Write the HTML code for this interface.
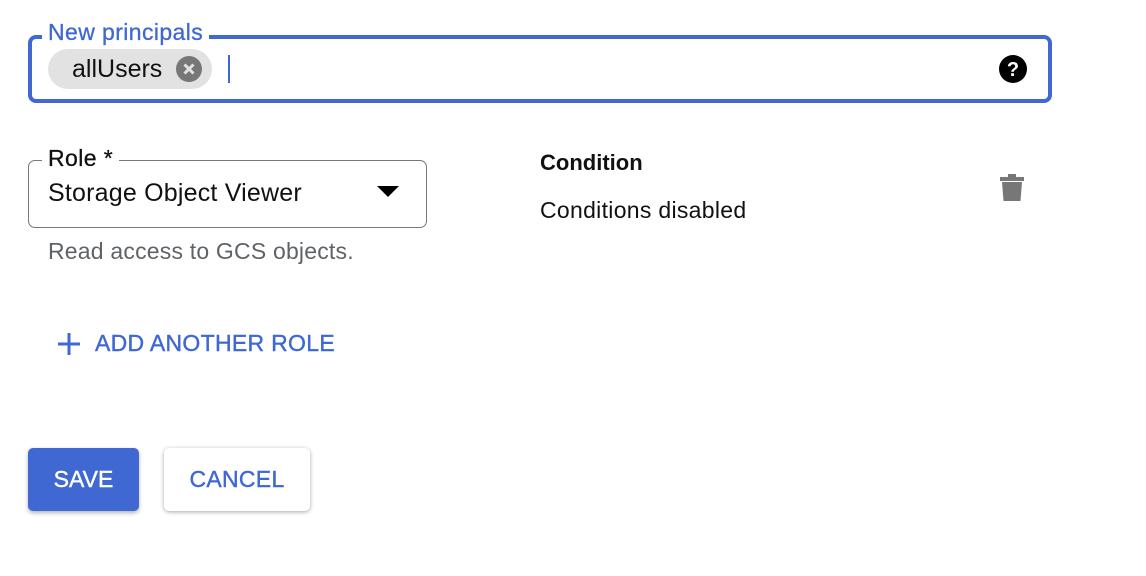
<!DOCTYPE html>
<html><head><style>
body{margin:0;width:1146px;height:576px;background:#fff;font-family:"Liberation Sans",Arial,sans-serif;position:relative;overflow:hidden}
.a{position:absolute;white-space:nowrap}
</style></head><body>
<div class="a" style="left:28px;top:35px;width:1016px;height:60px;border:4px solid #3f68d3;border-radius:8px"></div>
<div class="a" style="left:42px;top:19px;padding:0 6px;background:#fff;color:#3f68d3;font-size:23px;letter-spacing:0.4px;line-height:26px;-webkit-text-stroke:0.3px #3f68d3">New principals</div>
<div class="a" style="left:48px;top:49px;width:164px;height:40px;border-radius:20px;background:#e2e2e2"></div>
<div class="a" style="left:72px;top:55px;font-size:25px;line-height:28px;color:#111">allUsers</div>
<svg class="a" style="left:176px;top:56px" width="26" height="26" viewBox="0 0 26 26"><circle cx="13" cy="13" r="13" fill="#777"/><path d="M8.5 8.5L17.5 17.5M17.5 8.5L8.5 17.5" stroke="#e2e2e2" stroke-width="3"/></svg>
<div class="a" style="left:228px;top:55px;width:2px;height:28px;background:#3f68d3"></div>
<svg class="a" style="left:999px;top:55px" width="28" height="28" viewBox="0 0 28 28"><circle cx="14" cy="14" r="14" fill="#000"/><text x="14" y="21" text-anchor="middle" font-family="Liberation Sans" font-weight="bold" font-size="20" fill="#fff">?</text></svg>

<div class="a" style="left:28px;top:160px;width:397px;height:66px;border:1px solid #777;border-radius:7px"></div>
<div class="a" style="left:42px;top:144px;padding:0 6px;background:#fff;color:#111;font-size:23px;letter-spacing:0.4px;line-height:28px;-webkit-text-stroke:0.3px #111">Role *</div>
<div class="a" style="left:48px;top:179px;font-size:25px;letter-spacing:0.2px;line-height:28px;color:#111">Storage Object Viewer</div>
<svg class="a" style="left:377px;top:186px" width="22" height="12"><path d="M0 0H22L11 11Z" fill="#000"/></svg>
<div class="a" style="left:48px;top:238px;font-size:23px;letter-spacing:0.2px;line-height:27px;color:#5f6368">Read access to GCS objects.</div>

<div class="a" style="left:540px;top:149px;font-size:22px;font-weight:bold;line-height:27px;color:#111">Condition</div>
<div class="a" style="left:540px;top:197px;font-size:23px;letter-spacing:0.3px;line-height:27px;color:#111">Conditions disabled</div>
<svg class="a" style="left:1000px;top:173px" width="24" height="28" viewBox="0 0 24 28"><rect x="0" y="4" width="24" height="4" fill="#777"/><rect x="8" y="1" width="8" height="4" fill="#777"/><path d="M2 9H22L20.5 28H3.5Z" fill="#777"/></svg>

<svg class="a" style="left:58px;top:333px" width="22" height="22"><path d="M11 0V22M0 11H22" stroke="#3f68d3" stroke-width="3"/></svg>
<div class="a" style="left:95px;top:330px;font-size:23px;line-height:26px;color:#3f68d3;letter-spacing:0.3px;-webkit-text-stroke:0.4px #3f68d3">ADD ANOTHER ROLE</div>

<div class="a" style="left:28px;top:448px;width:111px;height:63px;background:#3f68d3;border-radius:5px;box-shadow:0 2px 4px rgba(0,0,0,.3);color:#fff;font-size:23px;line-height:63px;text-align:center;-webkit-text-stroke:0.4px #fff">SAVE</div>
<div class="a" style="left:164px;top:448px;width:146px;height:63px;background:#fff;border-radius:5px;box-shadow:0 1px 4px rgba(0,0,0,.35);color:#3f68d3;font-size:23px;letter-spacing:0.3px;line-height:63px;text-align:center;-webkit-text-stroke:0.4px #3f68d3">CANCEL</div>
</body></html>
